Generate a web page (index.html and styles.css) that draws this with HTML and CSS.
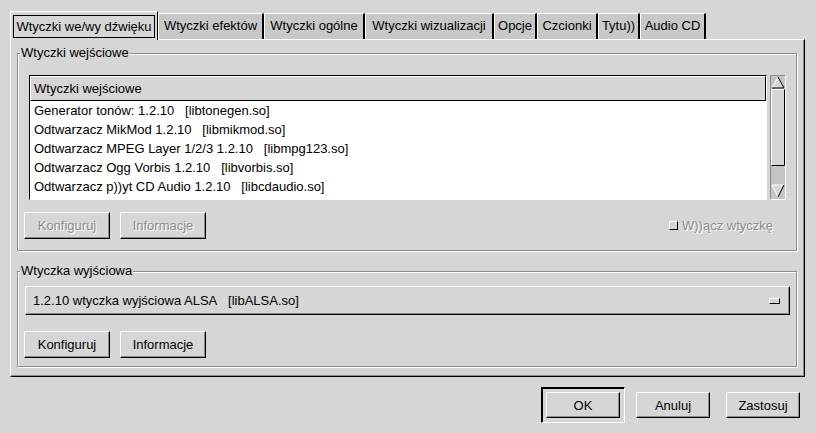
FILE: index.html
```html
<!DOCTYPE html>
<html lang="pl">
<head>
    <meta charset="UTF-8">
    <title>Ustawienia</title>
    <link rel="stylesheet" href="styles.css">
</head>
<body>

<div class="dialog">
    <div class="notebook">
        <div class="tabs">
            <div class="tab active tab-io"><span class="focus">Wtyczki we/wy dźwięku</span></div>
            <div class="tab tab-effects">Wtyczki efektów</div>
            <div class="tab tab-general">Wtyczki ogólne</div>
            <div class="tab tab-vis">Wtyczki wizualizacji</div>
            <div class="tab tab-options">Opcje</div>
            <div class="tab tab-fonts">Czcionki</div>
            <div class="tab tab-title">Tytu))</div>
            <div class="tab tab-cd">Audio CD</div>
        </div>

        <div class="page">
            <div class="frame frame-input">
                <span class="frame-label">Wtyczki wejściowe</span>
                <div class="list-row">
                    <div class="clist">
                        <div class="clist-head">Wtyczki wejściowe</div>
                        <div class="clist-body">
                            <div class="clist-item">Generator tonów: 1.2.10&nbsp;&nbsp;&nbsp;[libtonegen.so]</div>
                            <div class="clist-item">Odtwarzacz MikMod 1.2.10&nbsp;&nbsp;&nbsp;[libmikmod.so]</div>
                            <div class="clist-item">Odtwarzacz MPEG Layer 1/2/3 1.2.10&nbsp;&nbsp;&nbsp;[libmpg123.so]</div>
                            <div class="clist-item">Odtwarzacz Ogg Vorbis 1.2.10&nbsp;&nbsp;&nbsp;[libvorbis.so]</div>
                            <div class="clist-item">Odtwarzacz p))yt CD Audio 1.2.10&nbsp;&nbsp;&nbsp;[libcdaudio.so]</div>
                        </div>
                    </div>
                    <div class="vscroll">
                        <svg width="16" height="125" viewBox="0 0 16 125">
                            <!-- trough -->
                            <rect x="0" y="0" width="16" height="125" fill="#c4c4c4"/>
                            <path d="M0.5 124.5 V0.5 H15.5" fill="none" stroke="#8c8c8c"/>
                            <path d="M0.5 124.5 H15.5 V0.5" fill="none" stroke="#ffffff"/>
                            <!-- up stepper -->
                            <path d="M8 2 L2 13 H14 Z" fill="#d6d6d6"/>
                            <path d="M2 13 L8 2" fill="none" stroke="#ffffff"/>
                            <path d="M8 2 L14 13 H2" fill="none" stroke="#000000"/>
                            <!-- thumb -->
                            <rect x="1" y="14" width="14" height="77" fill="#d6d6d6"/>
                            <path d="M1.5 90.5 V14.5 H14.5" fill="none" stroke="#ffffff"/>
                            <path d="M1.5 90.5 H14.5 V14.5" fill="none" stroke="#000000"/>
                            <!-- down stepper -->
                            <path d="M2 110 H14 L8 122 Z" fill="#d6d6d6"/>
                            <path d="M2 110 H14 M2 110 L8 122" fill="none" stroke="#ffffff"/>
                            <path d="M14 110 L8 122" fill="none" stroke="#000000"/>
                        </svg>
                    </div>
                </div>
                <div class="frame-actions">
                    <button class="btn" disabled>Konfiguruj</button>
                    <button class="btn" disabled>Informacje</button>
                    <label class="check disabled"><span class="check-box"></span>W))ącz wtyczkę</label>
                </div>
            </div>

            <div class="frame frame-output">
                <span class="frame-label">Wtyczka wyjściowa</span>
                <div class="optmenu">
                    <span>1.2.10 wtyczka wyjściowa ALSA&nbsp;&nbsp;&nbsp;[libALSA.so]</span>
                    <span class="opt-ind"></span>
                </div>
                <div class="frame-actions">
                    <button class="btn">Konfiguruj</button>
                    <button class="btn">Informacje</button>
                </div>
            </div>
        </div>
    </div>

    <div class="dialog-buttons">
        <div class="default-frame"><button class="btn">OK</button></div>
        <button class="btn">Anuluj</button>
        <button class="btn">Zastosuj</button>
    </div>
</div>

</body>
</html>
```

FILE: styles.css
```css
body {
    margin: 0;
    background-color: #d6d6d6;
    font-family: "Liberation Sans", Arial, sans-serif;
    font-size: 13px;
    color: #000;
}
.dialog {
    padding: 11px 10px 0 10px;
}

/* notebook */
.tabs {
    display: flex;
    align-items: flex-end;
    height: 28px;
    position: relative;
    z-index: 1;
}
.tab {
    box-sizing: border-box;
    height: 26px;
    line-height: 24px;
    text-align: center;
    background-color: #c8c8c8;
    border-top: 1px solid #fff;
    border-left: 1px solid #fff;
    border-right: 2px solid #000;
    white-space: nowrap;
    overflow: hidden;
}
.tab-io { width: 148px; }
.tab-effects { width: 106px; }
.tab-general { width: 101px; }
.tab-vis { width: 129px; }
.tab-options { width: 43px; }
.tab-fonts { width: 61px; }
.tab-title { width: 42px; }
.tab-cd { width: 66px; }
.tab.active {
    height: 29px;
    margin-bottom: -1px;
    padding: 3px 2px 0 2px;
    background-color: #d6d6d6;
    border-right: 1px solid #000;
}
.tab.active .focus {
    display: block;
    height: 23px;
    line-height: 21px;
    border: 1px solid #000;
    box-sizing: border-box;
}
.page {
    box-sizing: border-box;
    height: 338px;
    padding: 13px 7px 0 6px;
    border-top: 1px solid #fff;
    border-left: 1px solid #fff;
    border-right: 1px solid #000;
    border-bottom: 1px solid #000;
    box-shadow: inset -1px -1px 0 #8c8c8c;
}

/* frames */
.frame {
    position: relative;
    box-sizing: border-box;
    border: 1px solid #8c8c8c;
    box-shadow: inset 1px 1px 0 #fff, 1px 1px 0 #fff;
    padding: 0 6px 0 6px;
}
.frame-label {
    position: absolute;
    top: -9px;
    left: 2px;
    padding: 0 1px;
    line-height: 16px;
    background-color: #d6d6d6;
}
.frame-input {
    height: 198px;
    padding-top: 21px;
}
.frame-output {
    margin-top: 20px;
    height: 96px;
    padding-top: 14px;
}

/* list */
.list-row {
    display: flex;
    gap: 3px;
    margin: 0 4px 0 5px;
}
.clist {
    flex: 1;
    height: 125px;
    box-sizing: border-box;
    border: 1px solid;
    border-color: #000 #fff #fff #000;
    background-color: #fff;
    overflow: hidden;
}
.clist-head {
    box-sizing: border-box;
    height: 25px;
    line-height: 23px;
    padding-left: 3px;
    background-color: #d6d6d6;
    border: 1px solid;
    border-color: #fff #000 #000 #fff;
}
.clist-item {
    height: 19px;
    line-height: 19px;
    padding-left: 4px;
    white-space: nowrap;
}
.vscroll {
    width: 16px;
    height: 125px;
}
.vscroll svg {
    display: block;
}

/* buttons */
.frame-actions {
    display: flex;
    align-items: center;
    gap: 10px;
    margin-top: 12px;
}
.frame-output .frame-actions {
    margin-top: 16px;
}
.btn {
    box-sizing: border-box;
    width: 86px;
    height: 27px;
    padding: 0;
    font: inherit;
    color: #000;
    background-color: #d6d6d6;
    border: 1px solid;
    border-color: #fff #000 #000 #fff;
    box-shadow: inset -1px -1px 0 #8c8c8c;
}
.btn:disabled {
    color: #8c8c8c;
    text-shadow: 1px 1px 0 #fff;
}
.check {
    margin-left: auto;
    margin-right: 17px;
    display: flex;
    align-items: center;
    gap: 4px;
}
.check.disabled {
    color: #8c8c8c;
    text-shadow: 1px 1px 0 #fff;
}
.check-box {
    width: 9px;
    height: 9px;
    box-sizing: border-box;
    border: 1px solid;
    border-color: #fff #000 #000 #fff;
    background-color: #d6d6d6;
}

/* option menu */
.optmenu {
    box-sizing: border-box;
    display: flex;
    align-items: center;
    justify-content: space-between;
    height: 29px;
    margin-left: 1px;
    padding: 0 9px 0 7px;
    border: 1px solid;
    border-color: #fff #000 #000 #fff;
    box-shadow: inset -1px -1px 0 #8c8c8c;
}
.opt-ind {
    width: 11px;
    height: 6px;
    box-sizing: border-box;
    border: 1px solid;
    border-color: #fff #000 #000 #fff;
}

/* bottom row */
.dialog-buttons {
    display: flex;
    justify-content: flex-end;
    align-items: center;
    margin-top: 10px;
    padding-right: 5px;
}
.dialog-buttons .btn {
    width: 74px;
    height: 26px;
    margin-left: 16px;
}
.default-frame {
    box-sizing: border-box;
    width: 84px;
    height: 36px;
    padding: 4px;
    border: 1px solid;
    border-color: #000 #fff #fff #000;
    box-shadow: inset 1px 1px 0 #000;
}
.default-frame .btn {
    margin-left: 0;
}
.dialog-buttons .default-frame + .btn {
    margin-left: 11px;
}
```
